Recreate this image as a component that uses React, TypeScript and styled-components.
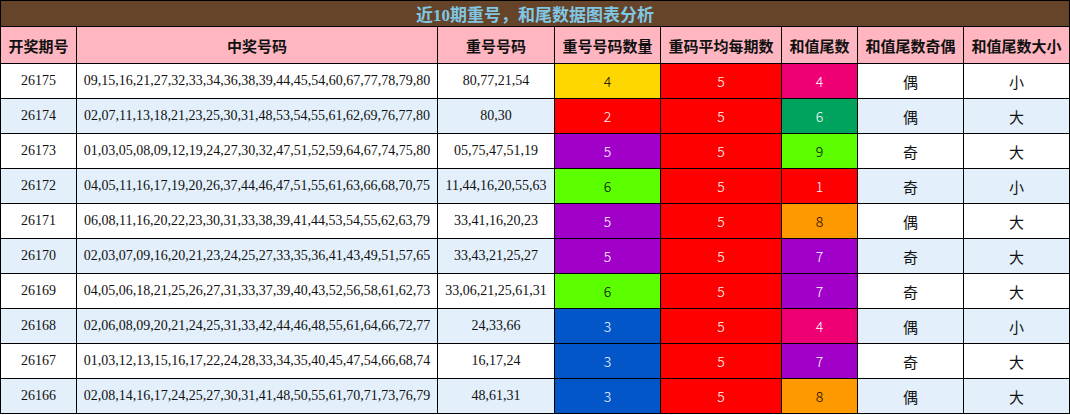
import React from "react";
import styled, { createGlobalStyle } from "styled-components";

const GlobalStyle = createGlobalStyle`
  html, body { margin: 0; padding: 0; background: #ffffff; }
`;

const Board = styled.div`
  display: grid;
  grid-template-columns: 75px 360px 116px 105px 120px 75px 105px 105px;
  grid-template-rows: 25px 36px repeat(10, 34px);
  gap: 1px;
  padding: 1px;
  width: max-content;
  background: #000000;
  font-family: "Liberation Serif", "Noto Sans CJK SC", serif;
`;

const Title = styled.div`
  grid-column: 1 / -1;
  display: flex;
  align-items: center;
  justify-content: center;
  background: #66442a;
  color: #7fc7e4;
  font-weight: bold;
  font-size: 17px;
  font-family: "Liberation Serif", "Noto Sans CJK SC", serif;
`;

const Head = styled.div`
  display: flex;
  align-items: center;
  justify-content: center;
  background: #ffb6c1;
  color: #111111;
  font-weight: bold;
  font-size: 15px;
  font-family: "Noto Sans CJK SC", sans-serif;
  white-space: nowrap;
`;

const Cell = styled.div<{ $alt: boolean }>`
  display: flex;
  align-items: center;
  justify-content: center;
  background: ${(p) => (p.$alt ? "#e3f0fb" : "#ffffff")};
  color: #111111;
  font-size: 14px;
  font-family: "Liberation Serif", serif;
  white-space: nowrap;
`;

const WordCell = styled(Cell)`
  font-family: "Noto Sans CJK SC", sans-serif;
  font-size: 15px;
`;

const ColorCell = styled.div<{ $bg: string; $dark: boolean }>`
  display: flex;
  align-items: center;
  justify-content: center;
  background: ${(p) => p.$bg};
  color: ${(p) => (p.$dark ? "#000000" : "#ffffff")};
  font-size: 14px;
  font-family: "Noto Sans CJK SC", sans-serif;
  font-weight: 300;
`;

const C = {
  gold: "#ffd700",
  red: "#ff0000",
  purple: "#a000c8",
  lime: "#5cff00",
  blue: "#0356c8",
  pink: "#ee0074",
  green: "#00a35e",
  orange: "#ff9900",
};

const darkOn = new Set([C.gold, C.lime, C.orange]);

type Row = {
  issue: string;
  nums: string;
  repeat: string;
  count: number;
  countBg: string;
  tail: number;
  tailBg: string;
  parity: string;
  size: string;
};

const rows: Row[] = [
  { issue: "26175", nums: "09,15,16,21,27,32,33,34,36,38,39,44,45,54,60,67,77,78,79,80", repeat: "80,77,21,54", count: 4, countBg: C.gold, tail: 4, tailBg: C.pink, parity: "偶", size: "小" },
  { issue: "26174", nums: "02,07,11,13,18,21,23,25,30,31,48,53,54,55,61,62,69,76,77,80", repeat: "80,30", count: 2, countBg: C.red, tail: 6, tailBg: C.green, parity: "偶", size: "大" },
  { issue: "26173", nums: "01,03,05,08,09,12,19,24,27,30,32,47,51,52,59,64,67,74,75,80", repeat: "05,75,47,51,19", count: 5, countBg: C.purple, tail: 9, tailBg: C.lime, parity: "奇", size: "大" },
  { issue: "26172", nums: "04,05,11,16,17,19,20,26,37,44,46,47,51,55,61,63,66,68,70,75", repeat: "11,44,16,20,55,63", count: 6, countBg: C.lime, tail: 1, tailBg: C.red, parity: "奇", size: "小" },
  { issue: "26171", nums: "06,08,11,16,20,22,23,30,31,33,38,39,41,44,53,54,55,62,63,79", repeat: "33,41,16,20,23", count: 5, countBg: C.purple, tail: 8, tailBg: C.orange, parity: "偶", size: "大" },
  { issue: "26170", nums: "02,03,07,09,16,20,21,23,24,25,27,33,35,36,41,43,49,51,57,65", repeat: "33,43,21,25,27", count: 5, countBg: C.purple, tail: 7, tailBg: C.purple, parity: "奇", size: "大" },
  { issue: "26169", nums: "04,05,06,18,21,25,26,27,31,33,37,39,40,43,52,56,58,61,62,73", repeat: "33,06,21,25,61,31", count: 6, countBg: C.lime, tail: 7, tailBg: C.purple, parity: "奇", size: "大" },
  { issue: "26168", nums: "02,06,08,09,20,21,24,25,31,33,42,44,46,48,55,61,64,66,72,77", repeat: "24,33,66", count: 3, countBg: C.blue, tail: 4, tailBg: C.pink, parity: "偶", size: "小" },
  { issue: "26167", nums: "01,03,12,13,15,16,17,22,24,28,33,34,35,40,45,47,54,66,68,74", repeat: "16,17,24", count: 3, countBg: C.blue, tail: 7, tailBg: C.purple, parity: "奇", size: "大" },
  { issue: "26166", nums: "02,08,14,16,17,24,25,27,30,31,41,48,50,55,61,70,71,73,76,79", repeat: "48,61,31", count: 3, countBg: C.blue, tail: 8, tailBg: C.orange, parity: "偶", size: "大" },
];

const headers = ["开奖期号", "中奖号码", "重号号码", "重号号码数量", "重码平均每期数", "和值尾数", "和值尾数奇偶", "和值尾数大小"];

export default function App() {
  return (
    <>
      <GlobalStyle />
      <Board>
        <Title>近10期重号，和尾数据图表分析</Title>
        {headers.map((h) => (
          <Head key={h}>{h}</Head>
        ))}
        {rows.map((r, i) => {
          const alt = i % 2 === 1;
          return (
            <React.Fragment key={r.issue}>
              <Cell $alt={alt}>{r.issue}</Cell>
              <Cell $alt={alt}>{r.nums}</Cell>
              <Cell $alt={alt}>{r.repeat}</Cell>
              <ColorCell $bg={r.countBg} $dark={darkOn.has(r.countBg)}>{r.count}</ColorCell>
              <ColorCell $bg={C.red} $dark={false}>5</ColorCell>
              <ColorCell $bg={r.tailBg} $dark={darkOn.has(r.tailBg)}>{r.tail}</ColorCell>
              <WordCell $alt={alt}>{r.parity}</WordCell>
              <WordCell $alt={alt}>{r.size}</WordCell>
            </React.Fragment>
          );
        })}
      </Board>
    </>
  );
}
